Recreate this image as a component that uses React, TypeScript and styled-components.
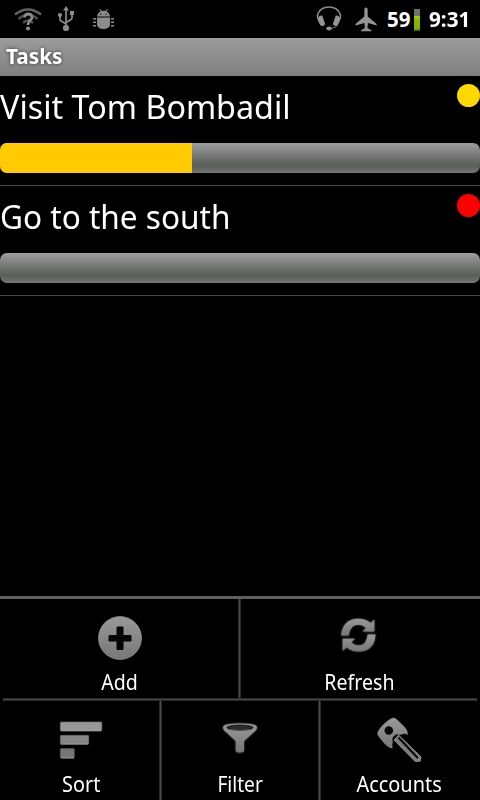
import React from 'react';
import styled, { createGlobalStyle } from 'styled-components';

const GlobalStyle = createGlobalStyle`
  *, *::before, *::after { box-sizing: border-box; }
  html, body { margin: 0; background: #000; }
  body { font-family: "Noto Sans", "Open Sans", sans-serif; color: #fff; }
  svg { display: block; flex: none; }
`;

const Screen = styled.div`
  width: 480px;
  height: 800px;
  display: flex;
  flex-direction: column;
  background: #000;
  overflow: hidden;
`;

const StatusBar = styled.header`
  height: 38px;
  flex: none;
  display: flex;
  align-items: center;
  justify-content: space-between;
  padding: 0 10px 0 14px;
`;

const StatusGroup = styled.div<{ $gap: number }>`
  display: flex;
  align-items: center;
  gap: ${p => p.$gap}px;
`;

const StatusText = styled.span<{ $width: number; $scale: number }>`
  width: ${p => p.$width}px;
  font-size: 20.5px;
  line-height: 38px;
  font-weight: 700;
  white-space: nowrap;
  transform: scaleX(${p => p.$scale});
  transform-origin: 0 50%;
`;

const Battery = styled.span`
  width: 6px;
  height: 22px;
  margin: 2px 9px 0 3px;
  background: linear-gradient(#707070 0 7px, #a5d020 7px, #86b800 11px, #80b000 20px, #3f6700 21px);
`;

const TitleBar = styled.div`
  height: 38px;
  flex: none;
  padding-left: 6px;
  background: linear-gradient(#9c9c9c, #808080);
  border-bottom: 1px solid #7c7c7c;
`;

const TitleText = styled.h1`
  display: inline-block;
  margin: 0;
  font-size: 21.5px;
  line-height: 36px;
  font-weight: 700;
  text-shadow: 0 0 4px #333;
  transform: scaleX(0.965);
  transform-origin: 0 50%;
`;

const TaskList = styled.main`
  flex: 1;
`;

const Task = styled.article`
  height: 110px;
  display: flex;
  flex-direction: column;
  border-bottom: 1px solid #484848;
`;

const TaskHeader = styled.div`
  height: 67px;
  flex: none;
  display: flex;
  justify-content: space-between;
`;

const TaskName = styled.h2<{ $scale: number }>`
  margin: 0;
  font-size: 33.5px;
  font-weight: 400;
  line-height: 60px;
  white-space: nowrap;
  transform: scaleX(${p => p.$scale});
  transform-origin: 0 50%;
`;

const Priority = styled.span<{ $color: string }>`
  width: 23px;
  height: 23px;
  margin-top: 8px;
  border-radius: 50%;
  background: ${p => p.$color};
`;

const Track = styled.div`
  height: 30px;
  border-radius: 7px;
  overflow: hidden;
  background: linear-gradient(#9d9d9d, #5a5d5a 75%, #747674);
`;

const Fill = styled.div`
  height: 100%;
  background: #ffcb00;
`;

const Menu = styled.nav`
  flex: none;
  border-top: 3px solid #5f5f5f;
`;

const MenuRow = styled.div<{ $columns: string }>`
  height: 99px;
  display: grid;
  grid-template-columns: ${p => p.$columns};
`;

const Divider = styled.div`
  height: 3px;
  margin: 0 3px;
  background: linear-gradient(#292929 0 1px, #474747 1px 2px, #292929 2px);
`;

const VerticalDivider = styled.div`
  background: linear-gradient(90deg, #292929 0 1px, #474747 1px 2px, #292929 2px);
`;

const MenuItem = styled.div<{ $start?: number; $end?: number }>`
  display: flex;
  flex-direction: column;
  align-items: center;
  padding: 0 ${p => p.$end ?? 0}px 0 ${p => p.$start ?? 0}px;
`;

const IconSlot = styled.div`
  height: 67px;
  padding-top: 8px;
`;

const Label = styled.span<{ $scale: number }>`
  font-size: 22px;
  line-height: 30px;
  white-space: nowrap;
  transform: scaleX(${p => p.$scale});
`;

const WifiIcon = () => (
  <svg width="28" height="26" viewBox="14 6 28 26" fill="none">
    <path d="M15 14.500 Q28 4.500 41 14.500" stroke="#626262" strokeWidth="2.600" />
    <path d="M18.500 19 Q28 10.500 37.500 19M23 23 Q28 18 33 23" stroke="#4d4d4d" strokeWidth="2.500" />
    <path d="M24.500 17.500C24.500 12.500 32.500 13 32 17.500C31.700 20.500 28 20.500 28 25" stroke="#8c8c8c" strokeWidth="2.800" />
    <circle cx="28" cy="28.500" r="2" fill="#8c8c8c" />
  </svg>
);

const UsbIcon = () => (
  <svg width="16" height="26" viewBox="58 6 16 26" fill="none" stroke="#8c8c8c" strokeWidth="1.700">
    <path d="M66 28V9M60 16v3.500q0 1 1 1.500l5 3M72 15v3q0 1-1 1.500l-5 3" />
    <path d="M66 6l-3 4.500h6zM70 11h4v4h-4z" fill="#8c8c8c" stroke="none" />
    <circle cx="60" cy="15" r="2.100" fill="#8c8c8c" stroke="none" />
    <circle cx="66" cy="28" r="3.100" fill="#8c8c8c" stroke="none" />
  </svg>
);

const DebugIcon = () => (
  <svg width="22" height="22" viewBox="93 7 22 22" fill="#8c8c8c">
    <path d="M97 15.500q.5-4 3.700-5l-1.400-2 .7-.5 1.800 2q1.800-.6 3.600 0l1.800-2 .7.5-1.400 2q3 1.200 3.500 5z" />
    <path d="M97 16.500h13v7.500q-1 4-6.500 4T97 24zM93 17h3v1.500h-3zM93 20.500h3V22h-3zM93 24h3v1.500h-3zM111 17h3v1.500h-3zM111 20.500h3V22h-3zM111 24h3v1.500h-3z" />
    <path d="M100 12.500h1.300v1.300H100zM105.500 12.500h1.300v1.300h-1.300z" fill="#222" />
  </svg>
);

const HeadsetIcon = () => (
  <svg width="26" height="26" viewBox="316 7 26 26" fill="none">
    <path d="M319.500 22.500Q316.500 18.500 318 14.500Q321 8 329 8Q337 8 340 14.500Q341.500 18.500 338.500 22.500" stroke="#8c8c8c" strokeWidth="1.600" />
    <path d="M338 25q-1.500 4-7 4.500" stroke="#777" strokeWidth="1" />
    <path d="M318.500 18q2-1.800 3.800-1.300l2.900 8.500q-1.700 2.500-4.300 1.500-3.300-3.500-2.400-8.700zM339.500 18q-2-1.800-3.800-1.300l-2.900 8.500q1.700 2.500 4.300 1.500 3.300-3.500 2.400-8.700z" fill="#949494" />
    <ellipse cx="329" cy="29.500" rx="2.700" ry="1.900" fill="#949494" />
  </svg>
);

const PlaneIcon = () => (
  <svg width="22" height="25" viewBox="355 7 22 25" fill="#949494">
    <path d="M366 7.500q1.700 0 1.700 3v6l9 7.500v1.500l-8.700-2.500-.6 5 4 2.300v1H361v-1l4-2.300-.6-5-8.900 2.500V24l8.800-7.500v-6q0-3 1.700-3z" />
  </svg>
);

const IconDefs = () => (
  <defs>
    <linearGradient id="metal" x1="0" y1="0" x2="0" y2="1">
      <stop offset="0" stopColor="#999" />
      <stop offset="1" stopColor="#777" />
    </linearGradient>
    <filter id="glow" x="-20%" y="-20%" width="140%" height="140%">
      <feDropShadow dx="0" dy="0" stdDeviation="0.8" floodColor="#aaa" floodOpacity="0.6" />
    </filter>
  </defs>
);

const AddIcon = () => (
  <svg width="60" height="60" viewBox="90 607 60 60">
    <IconDefs />
    <circle cx="120" cy="638" r="21.500" fill="url(#metal)" stroke="#969696" strokeWidth=".7" />
    <path d="M117 627h6v8.500h8v5.500h-8v8.500h-6V641h-8v-5.500h8z" fill="#050505" stroke="#050505" strokeWidth="1" strokeLinejoin="round" />
  </svg>
);

const RefreshIcon = () => (
  <svg width="60" height="60" viewBox="329 607 60 60" fill="url(#metal)" filter="url(#glow)">
    <path d="M341.200 635.500C342 625 348 618.700 358 618.700Q365.500 618.700 371 623l3.300-3.500v12h-11.800l3.500-3.400q-3.200-3.300-8.200-3.300-8 0-9 10.700z" />
    <path d="M375.500 634.500C375 646 368.500 651.500 358.500 651.500Q351.500 651.500 346.500 647.300l-3.800 3.700v-12.200h12.200l-3.800 3.800q3.300 3 7.400 3 8.200 0 9.200-11.100z" />
  </svg>
);

const SortIcon = () => (
  <svg width="60" height="60" viewBox="51 709 60 60">
    <rect x="60.300" y="722" width="41.500" height="9" rx="1" fill="#979797" stroke="#777" strokeWidth=".6" />
    <rect x="60.300" y="735.300" width="28.500" height="9" rx="1" fill="#858585" stroke="#686868" strokeWidth=".6" />
    <rect x="60.300" y="748.600" width="14" height="9.500" rx="1" fill="#757575" stroke="#5c5c5c" strokeWidth=".6" />
    <path d="M61 730.700h40M61 744h27M61 758h13" stroke="#aaa" strokeWidth=".8" />
  </svg>
);

const FilterIcon = () => (
  <svg width="60" height="60" viewBox="210 709 60 60" filter="url(#glow)">
    <path d="M223 727.500Q223 723.500 240 723.500T257 727.500q0 2-3 4.500l-10 9V751q-1 1.500-4.200 1.500t-4-1.500v-10L226 732q-3-2.500-3-4.500z" fill="url(#metal)" />
    <ellipse cx="240" cy="727.600" rx="13.200" ry="2.600" fill="#2b2b2b" stroke="#141414" strokeWidth=".8" />
    <path d="M230 729.500q10 1.500 20 0" stroke="#555" fill="none" />
  </svg>
);

const AccountsIcon = () => (
  <svg width="60" height="60" viewBox="370 709 60 60">
    <path d="M391.500 718.500q2-1 4 0l8 7.500q4.500 4.500 4 8.500-2-1.500-4.500-.8l-3 .8q-4-1.500-6.500 1.500-2.500 3-1 6-1 1.500-.3 6-3.500 0-8-5l-6-7.500q-1-2 0-4 4.500-8 13.300-13z" fill="url(#metal)" stroke="#929292" strokeWidth=".6" />
    <circle cx="388.800" cy="730.500" r="4.300" fill="#090909" />
    <path d="M398.500 735l22.500 22-.8 4.200-5 .3-21.200-21.500z" fill="#7c7c7c" stroke="#8c8c8c" strokeWidth="1" strokeLinejoin="round" />
    <path d="M398.500 737.500l19.300 20.500" stroke="#080808" strokeWidth="2" />
  </svg>
);

interface TaskData {
  name: string;
  scale: number;
  color: string;
  progress: number;
}

const tasks: TaskData[] = [
  { name: 'Visit Tom Bombadil', scale: 0.964, color: '#ffd800', progress: 40 },
  { name: 'Go to the south', scale: 0.942, color: '#ff0000', progress: 0 },
];

export default function App() {
  return (
    <Screen>
      <GlobalStyle />
      <StatusBar>
        <StatusGroup $gap={19}>
          <StatusGroup $gap={16}>
            <WifiIcon />
            <UsbIcon />
          </StatusGroup>
          <DebugIcon />
        </StatusGroup>
        <StatusGroup $gap={10}>
          <StatusGroup $gap={13}>
            <HeadsetIcon />
            <PlaneIcon />
          </StatusGroup>
          <StatusGroup $gap={0}>
            <StatusText $width={24} $scale={1}>59</StatusText>
            <Battery />
            <StatusText $width={41} $scale={1.01}>9:31</StatusText>
          </StatusGroup>
        </StatusGroup>
      </StatusBar>
      <TitleBar>
        <TitleText>Tasks</TitleText>
      </TitleBar>
      <TaskList>
        {tasks.map(task => (
          <Task key={task.name}>
            <TaskHeader>
              <TaskName $scale={task.scale}>{task.name}</TaskName>
              <Priority $color={task.color} />
            </TaskHeader>
            <Track>
              <Fill style={{ width: `${task.progress}%` }} />
            </Track>
          </Task>
        ))}
      </TaskList>
      <Menu>
        <MenuRow $columns="238px 3px 1fr">
          <MenuItem $start={2}>
            <IconSlot><AddIcon /></IconSlot>
            <Label $scale={0.89}>Add</Label>
          </MenuItem>
          <VerticalDivider />
          <MenuItem $end={3}>
            <IconSlot><RefreshIcon /></IconSlot>
            <Label $scale={0.89}>Refresh</Label>
          </MenuItem>
        </MenuRow>
        <Divider />
        <MenuRow $columns="159px 3px 156px 3px 1fr">
          <MenuItem $start={3}>
            <IconSlot><SortIcon /></IconSlot>
            <Label $scale={0.9}>Sort</Label>
          </MenuItem>
          <VerticalDivider />
          <MenuItem>
            <IconSlot><FilterIcon /></IconSlot>
            <Label $scale={0.87}>Filter</Label>
          </MenuItem>
          <VerticalDivider />
          <MenuItem $end={2}>
            <IconSlot><AccountsIcon /></IconSlot>
            <Label $scale={0.905}>Accounts</Label>
          </MenuItem>
        </MenuRow>
      </Menu>
    </Screen>
  );
}
